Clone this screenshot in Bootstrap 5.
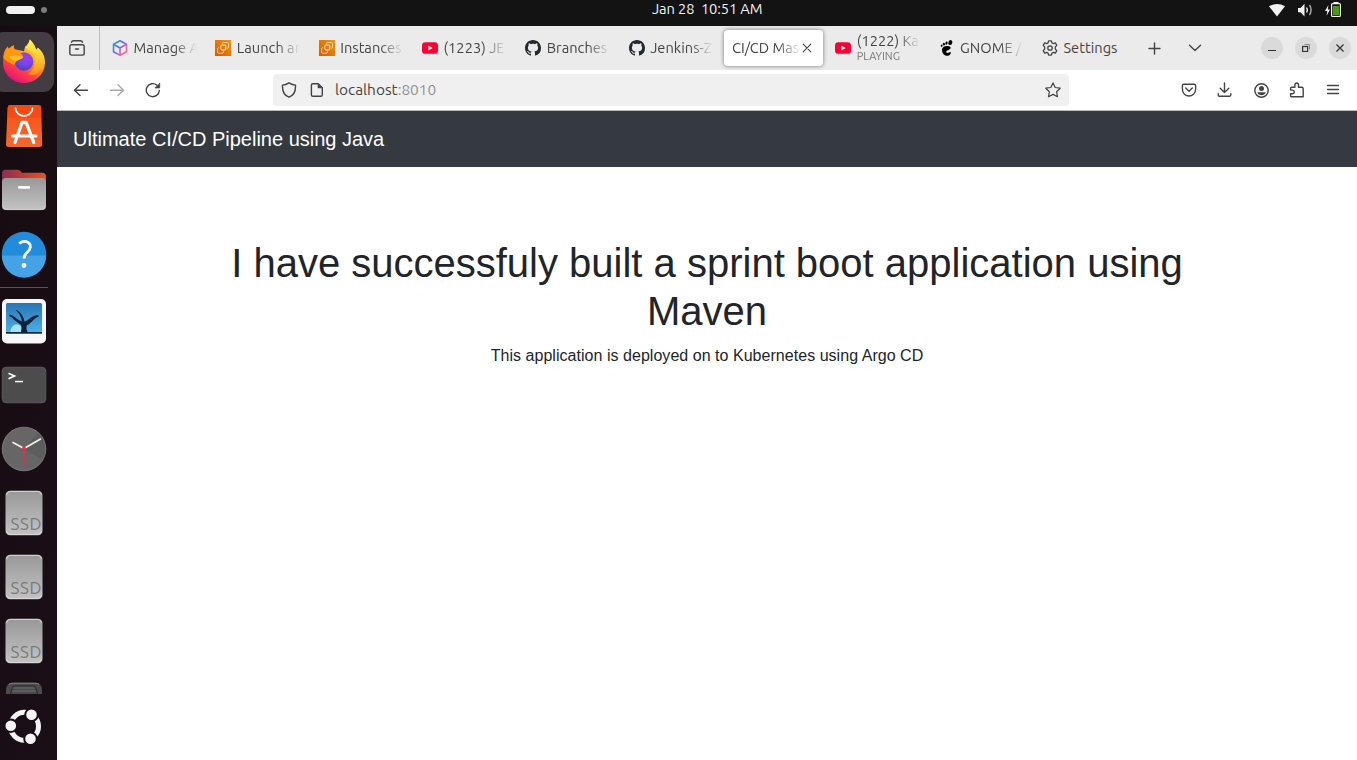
<!DOCTYPE html>
<html lang="en">
<head>
<meta charset="utf-8">
<title>CI/CD Master</title>
<link href="https://cdn.jsdelivr.net/npm/bootstrap@5.3.0/dist/css/bootstrap.min.css" rel="stylesheet">
<style>
body{width:1357px;height:760px;overflow:hidden;background:#fff;font-family:"Liberation Sans",Arial,sans-serif;color:#212529}
svg{display:block;flex:none}
.ui{font-family:Ubuntu,"Noto Sans",sans-serif;color:#444;white-space:nowrap}
.topbar{height:26px;background:#131313;padding-left:6px}
.pill{width:29px;height:8px;border-radius:4px;background:#f2f2f2;margin-top:-6px}
.dot{width:6px;height:6px;border-radius:3px;background:#7c7c7c;margin:-6px 0 0 6px}
.topbar .clock{margin-left:605px;width:114px;font-size:14.667px;line-height:18px;color:#f2f2f2;letter-spacing:-.1px;height:26px;white-space:pre}
.status{margin-left:499px;height:26px}
.dock{width:57px;height:734px;background:linear-gradient(100deg,#150c11,#1b0f17)}
.dock text{font-family:Ubuntu,"Noto Sans",sans-serif;font-size:17px;fill:#7a7a7a}
.pane{width:1300px}
.strip{height:44px;background:#ebebeb}
.viewbtn{width:43px;border-right:1px solid #bcbcbc;padding-left:12px;margin-right:4px}
.tab{width:103.33px;padding-left:8px;height:44px;flex:none}
.tab .cap{width:65px;margin-left:5.5px;font-size:14.667px;overflow:hidden;line-height:20px;-webkit-mask-image:linear-gradient(90deg,#000 40px,transparent 63px);mask-image:linear-gradient(90deg,#000 40px,transparent 63px)}
.tab .cap.full{-webkit-mask-image:none;mask-image:none}
.tab .cap.two{margin-top:-3px}
.tab .sub{font-size:11px;line-height:12px;color:#777;margin-top:-1px}
.tab.on{width:99px;height:36px;margin:0 4.3px 0 0;background:#fff;border-radius:4px;box-shadow:0 0 4px rgba(0,0,0,.5)}
.tab.on .cap{margin-left:0;width:68px;-webkit-mask-image:linear-gradient(90deg,#000 46px,transparent 69px);mask-image:linear-gradient(90deg,#000 46px,transparent 69px)}
.addtab{margin-left:9px}
.alltabs{margin:0 58px 0 25px}
.wbtn{width:22px;height:22px;border-radius:50%;background:#dadada;margin-right:12px}
.wbtn:last-child{margin-right:0}
.tools{height:41px;border-bottom:1px solid #b9b9bb;padding-left:6px;background:#fff}
.tool{width:36px;height:40px}
.url{width:796px;height:32px;margin:0 102px;border-radius:4px;background:#f0f0f0;padding:0 8px;font-size:15.4px}
.pageicon{margin:0 10px 0 12px}
.port{color:#929292}
.head{height:56px;background:#343a40;padding:0 16px;font-size:20px;color:#fff}
.hero{width:960px;margin:72px auto 0}
.hero h1{font-size:40px;line-height:48px;font-weight:400;margin-bottom:9px}
.hero p{font-size:16px;line-height:24px;margin:0;letter-spacing:.035px}
.ln{fill:none;stroke:#444;stroke-width:1.4;stroke-linecap:round;stroke-linejoin:round}
</style>
<script src="https://cdn.jsdelivr.net/npm/bootstrap@5.3.0/dist/js/bootstrap.bundle.min.js"></script>
</head>
<body>
<svg width="0" height="0" class="position-absolute">
<defs>
<linearGradient id="cube" x1="0" y1="0" x2="1" y2="1"><stop offset="0" stop-color="#13b5d8"/><stop offset=".4" stop-color="#5a6cf3"/><stop offset=".65" stop-color="#e35bd0"/><stop offset="1" stop-color="#ff7a45"/></linearGradient>
<linearGradient id="aws" x1="0" y1="1" x2="1" y2="0"><stop offset="0" stop-color="#d05c08"/><stop offset="1" stop-color="#f79408"/></linearGradient>
<linearGradient id="fox" x1=".85" y1=".1" x2=".3" y2="1"><stop offset="0" stop-color="#fff44f"/><stop offset=".4" stop-color="#ff9a1f"/><stop offset=".7" stop-color="#ff3d47"/><stop offset="1" stop-color="#e2107f"/></linearGradient>
<linearGradient id="flame" x1="0" y1="0" x2="0" y2="1"><stop offset="0" stop-color="#fff44f"/><stop offset=".5" stop-color="#ffcb2e"/><stop offset="1" stop-color="#ff8a1e"/></linearGradient>
<radialGradient id="globe" cx=".6" cy=".25" r=".8"><stop offset="0" stop-color="#a33af0"/><stop offset=".5" stop-color="#7648e6"/><stop offset="1" stop-color="#4a3fb8"/></radialGradient>
<linearGradient id="bag" x1="0" y1="0" x2="0" y2="1"><stop offset="0" stop-color="#fb4f14"/><stop offset="1" stop-color="#f0692f"/></linearGradient>
<linearGradient id="fold" x1="0" y1="0" x2="1" y2="0"><stop offset="0" stop-color="#8b2d52"/><stop offset="1" stop-color="#e8541f"/></linearGradient>
<linearGradient id="grey" x1="0" y1="0" x2="0" y2="1"><stop offset="0" stop-color="#989898"/><stop offset="1" stop-color="#c3c3c3"/></linearGradient>
<linearGradient id="sky" x1="0" y1="0" x2="0" y2="1"><stop offset="0" stop-color="#2774b5"/><stop offset="1" stop-color="#4eb3ea"/></linearGradient>
<symbol id="i-aws" viewBox="0 0 16 16"><rect width="16" height="16" fill="url(#aws)"/><g fill="none" stroke="#fff" stroke-width=".8"><rect x="5.800" y="5" width="5" height="5" rx="1.200"/><path d="M4.300 7.700H3.600q-1 0-1 1v3.500q0 1 1 1h3.700q1 0 1-1v-.9M7.500 3.800v-.4q0-.9.900-.9h4q1 0 1 1v3.800q0 1-1 1h-.3" opacity=".8"/></g></symbol>
<symbol id="i-yt" viewBox="0 0 16 16"><rect x="0" y="2.200" width="16" height="11.600" rx="3.400" fill="#ff0033"/><path d="M6.400 5.600v4.800L10.500 8z" fill="#fff"/></symbol>
<symbol id="i-gh" viewBox="0 0 16 16"><path fill="#24292f" d="M8 0C3.58 0 0 3.58 0 8c0 3.54 2.29 6.53 5.47 7.59.4.07.55-.17.55-.38 0-.19-.01-.82-.01-1.49-2.01.37-2.53-.49-2.69-.94-.09-.23-.48-.94-.82-1.13-.28-.15-.68-.52-.01-.53.63-.01 1.08.58 1.23.82.72 1.21 1.87.87 2.33.66.07-.52.28-.87.51-1.07-1.78-.2-3.64-.89-3.64-3.95 0-.87.31-1.59.82-2.15-.08-.2-.36-1.02.08-2.12 0 0 .67-.21 2.2.82.64-.18 1.32-.27 2-.27s1.36.09 2 .27c1.53-1.04 2.2-.82 2.2-.82.44 1.1.16 1.92.08 2.12.51.56.82 1.27.82 2.15 0 3.07-1.87 3.75-3.65 3.95.29.25.54.73.54 1.48 0 1.07-.01 1.93-.01 2.2 0 .21.15.46.55.38A8.01 8.01 0 0 0 16 8c0-4.42-3.58-8-8-8z"/></symbol>
<symbol id="i-ssd" viewBox="0 0 57 64"><rect x="5.500" y="9.700" width="37" height="44.500" rx="4.500" fill="url(#grey)"/><path d="M6.500 50q.5 3.500 4 3.500h27q3.500 0 4-3.500M6.500 14q.5-3.600 4-3.600h27q3.500 0 4 3.600" fill="none" stroke="#d8d8d8"/></symbol>
</defs></svg>

<div class="topbar d-flex align-items-center">
  <div class="pill"></div><div class="dot"></div>
  <div class="clock ui">Jan 28  10:51 AM</div>
  <svg class="status" width="84" height="26" viewBox="1265 0 84 26"><path d="M1269 6.300q8-4.600 16 0L1277 16.500z" fill="#f2f2f2"/><path d="M1298 8h2.500l4-4.300v12.800l-4-4.200h-2.500z" fill="#f2f2f2"/><path d="M1306.500 7.500q1.700 2.500 0 5" fill="none" stroke="#f2f2f2" stroke-width="1.300"/><path d="M1309.500 5q3.200 5 0 10" fill="none" stroke="#aaa" stroke-width="1.400"/><path d="M1328.400 5l-3.400 6h2.300l-.7 4.800 3.400-6.300h-2.200z" fill="#f2f2f2"/><rect x="1333.500" y="2" width="5" height="2" fill="#f2f2f2"/><rect x="1331.600" y="3.600" width="8.800" height="12.900" rx="1" fill="#131313" stroke="#f2f2f2" stroke-width="1.200"/><rect x="1333" y="6" width="6" height="9.300" fill="#4e9a06"/></svg>
</div>

<div class="d-flex">
  <nav class="dock d-flex flex-column flex-shrink-0">
    <svg width="57" height="68" viewBox="0 26 57 68"><rect x="-8" y="32" width="62" height="60" rx="11" fill="#433c42"/>
      <path d="M3.300 57c.4-5 2.200-8.500 4.700-10.600 0 1 .3 2 .7 2.700 1.300-1.700 3.100-3 5.200-3.600-.2 1.400 0 2.600.7 3.700l9.400 2L25 47c2.200-1.200 4-4 4.900-7.500 3.500 3.500 5.500 7 6.200 10.500l1.700-2.200C43 52 45.200 57 45 63c-.5 11.500-9.500 20-21 20S3 74 3 62.500z" fill="url(#fox)"/>
      <path d="M25 47c2.200-1.200 4-4 4.900-7.500 3.500 3.500 5.500 7 6.200 10.500l1.700-2.200C45 55 46 64 40 71c-4 5-10 4-12 3 8-4 9-17 4-22z" fill="url(#flame)"/>
      <circle cx="24" cy="61.500" r="9.300" fill="url(#globe)"/>
      <path d="M8 46.400c0 1 .3 2 .7 2.700 1.300-1.700 3.100-3 5.200-3.600-.2 2 .5 4 2 5.300 3 0 5 1.500 7.500 6.200-2 2.500-5 2.800-6.700 4-1.700 1.300-1.200 3.200-2.600 4C8.500 63 5 60 3.500 58c0-5 2-9.500 4.500-11.600z" fill="#ff980e"/>
      <path d="M9.500 56.500c4-2 9-1 13.700.5-1.500 2.500-5 2.500-6.700 3.500-2 1-5-1-7-4z" fill="#ffbd2e"/></svg>
    <svg width="57" height="64" viewBox="0 94 57 64"><path d="M11 105h27q3 0 3.200 3l1 36q0 3-3 3H9q-3.200 0-3-3l1.600-36q.3-3 3.400-3z" fill="url(#bag)"/><path d="M8 105h33v13H7z" fill="#f04510" opacity=".55"/><path d="M15.500 108.500c1.500 10 15.500 10 17 0" fill="none" stroke="#fff" stroke-width="1.800" stroke-linecap="round"/><path d="M15 142.500l7-20h4.200l7.500 20" fill="none" stroke="#fff" stroke-width="3.300" stroke-linecap="round" stroke-linejoin="round"/><path d="M12.500 136h23.500" stroke="#fff" stroke-width="3" stroke-linecap="round"/></svg>
    <svg width="57" height="64" viewBox="0 158 57 64"><path d="M2 184v-11q0-3.200 3.500-3.200h12.500q1.800 0 3 1.800l1 1.200h20q4 0 4 4v8z" fill="url(#fold)"/><rect x="2" y="178" width="44" height="32" rx="4" fill="url(#grey)"/><path d="M3 206q.5 3.600 4 3.600h34q3.500 0 4-3.600" fill="none" stroke="#d0d0d0"/><rect x="18" y="186" width="12" height="2.800" rx="1" fill="#fff"/></svg>
    <svg width="57" height="64" viewBox="0 222 57 64"><circle cx="24" cy="254" r="22.200" fill="#238bdb"/><path d="M1.800 255.500h44.400a22.200 22.200 0 0 1-44.400 0z" fill="#44a2e5"/><path d="M19.200 243.500c3.500-3.600 11.200-2.500 11.200 3.300 0 5.500-6.400 5.600-6.400 11.700" fill="none" stroke="#fff" stroke-width="2.800"/><circle cx="24" cy="265.500" r="2.400" fill="#fff"/></svg>
    <svg width="57" height="3" viewBox="0 286 57 3"><rect y="287" width="48" height="1" fill="#57535a"/></svg>
    <svg width="57" height="64" viewBox="0 289 57 64"><rect x="2" y="299" width="44" height="44.500" rx="5" fill="#f7f7f7"/><rect x="6" y="303" width="36" height="31" rx="1.500" fill="url(#sky)"/><path d="M10.500 332c0-10 12-10 12.500 0z" fill="#a9e2ff"/><path d="M6 332h36v1.500H6zM21 332c1-6 .5-7-2-8.500-3.500-2-6-5.500-10-7.700l1-1.300c4 1 7.500 5.500 12 7-1-6-3-8-6.500-12 5.500 2.500 8 6.500 9 12 4-1 6-5.500 13.500-6.500l1 1.500c-5.500 1.500-8 7.500-12 8.500-.8 2-.8 4 .5 7z" fill="#0b2338"/></svg>
    <svg width="57" height="64" viewBox="0 353 57 64"><rect x="2.200" y="367.200" width="43.600" height="35.600" rx="4" fill="#4c4c4c" stroke="#666" stroke-width=".8"/><path d="M8.500 373.300l6 2.700-6 2.800" fill="none" stroke="#fff" stroke-width="1.700"/><rect x="15" y="380.800" width="8" height="1.500" fill="#fff"/></svg>
    <svg width="57" height="64" viewBox="0 417 57 64"><circle cx="24" cy="449" r="21.800" fill="#666" stroke="#878787" stroke-width=".8"/><path d="M24 449l18.500 10.500A21.500 21.500 0 0 0 38 433z" fill="#5d5d5d"/><path d="M13 442.500l11 6 16.500-9.500" fill="none" stroke="#f3f3e9" stroke-width="1.600" stroke-linecap="round"/><path d="M24 446v19" stroke="#ff2744" stroke-width="1.100"/><circle cx="24" cy="448.500" r="1.900" fill="#ff2744"/></svg>
    <svg width="57" height="64"><use href="#i-ssd"/><text x="10.500" y="49" textLength="31">SSD</text></svg>
    <svg width="57" height="64"><use href="#i-ssd"/><text x="10.500" y="49" textLength="31">SSD</text></svg>
    <svg width="57" height="64"><use href="#i-ssd"/><text x="10.500" y="49" textLength="31">SSD</text></svg>
    <svg width="57" height="21" viewBox="0 673 57 21"><path d="M6 694v-4q.3-7 6-7h24q5.700 0 6 7v4z" fill="#4b4b4b"/><path d="M9 684.500q1-1.300 4-1.300h22q3 0 4 1.300" stroke="#888" fill="none"/><path d="M10.500 694l1.500-6q.5-2 2.500-2h19q2 0 2.500 2l1.500 6" fill="#4a4a4a" stroke="#2d2d2d"/><path d="M13.500 688h21M12.500 691h23" stroke="#6f6f6f"/></svg>
    <svg width="57" height="66" viewBox="0 694 57 66"><circle cx="24.500" cy="726.300" r="14" fill="none" stroke="#f4f4f4" stroke-width="5"/><g fill="#f4f4f4" stroke="#190e14" stroke-width="2"><circle cx="31.500" cy="714.800" r="6.300"/><circle cx="10.800" cy="725.700" r="6.300"/><circle cx="30.500" cy="738.800" r="6.300"/></g></svg>
  </nav>

  <main class="pane flex-shrink-0">
    <div class="strip ui d-flex align-items-center">
      <div class="viewbtn h-100 d-flex align-items-center flex-shrink-0"><svg width="16" height="16" viewBox="0 0 16 16" class="ln"><rect x=".8" y="4.800" width="14.400" height="10.300" rx="1.800"/><path d="M2.500 2.200q.4-1.400 2-1.400h7q1.600 0 2 1.400M6.500 9h3"/></svg></div>
      <div class="tab d-flex align-items-center"><svg width="16" height="16" viewBox="0 0 16 16"><path d="M8 .8l6.500 3.500v7.400L8 15.200l-6.500-3.500V4.300zM1.500 4.300L8 8l6.500-3.700M8 8v7" fill="none" stroke="url(#cube)" stroke-width="1.600" stroke-linejoin="round"/></svg><div class="cap">Manage A</div></div>
      <div class="tab d-flex align-items-center"><svg width="16" height="16"><use href="#i-aws"/></svg><div class="cap">Launch an</div></div>
      <div class="tab d-flex align-items-center"><svg width="16" height="16"><use href="#i-aws"/></svg><div class="cap">Instances</div></div>
      <div class="tab d-flex align-items-center"><svg width="16" height="16"><use href="#i-yt"/></svg><div class="cap">(1223) JE</div></div>
      <div class="tab d-flex align-items-center"><svg width="16" height="16"><use href="#i-gh"/></svg><div class="cap">Branches</div></div>
      <div class="tab d-flex align-items-center"><svg width="16" height="16"><use href="#i-gh"/></svg><div class="cap">Jenkins-Z</div></div>
      <div class="tab on d-flex align-items-center"><div class="cap">CI/CD Mas</div><svg width="14" height="14" viewBox="0 0 14 14" class="ln"><path d="M3.200 3.200l7.600 7.600M10.800 3.200l-7.600 7.600" stroke-width="1.100"/></svg></div>
      <div class="tab d-flex align-items-center"><svg width="16" height="16"><use href="#i-yt"/></svg><div class="cap two">(1222) Ka<div class="sub">PLAYING</div></div></div>
      <div class="tab d-flex align-items-center"><svg width="16" height="16" viewBox="0 0 16 16"><g fill="#000"><ellipse cx="11.300" cy="2.600" rx="1.900" ry="2.500" transform="rotate(20 11.300 2.600)"/><ellipse cx="7.500" cy="3.100" rx="1.100" ry="1.700" transform="rotate(10 7.500 3.100)"/><ellipse cx="4.900" cy="4.200" rx="1" ry="1.400"/><ellipse cx="2.700" cy="5.700" rx=".9" ry="1.200" transform="rotate(-15 2.700 5.700)"/><path d="M11.500 7.200C10 4.700 2.500 5.800 3 10.300c.3 3 2.200 5.500 5 5.500 2.600 0 4.500-2.600 3.600-3.600-.8-.8-1.700.9-3.200.7-1.500-.2-1.600-1.900-.2-2.500 1.700-.7 4-1.400 3.300-3.200z"/></g></svg><div class="cap">GNOME /</div></div>
      <div class="tab d-flex align-items-center"><svg width="16" height="16" viewBox="0 0 16 16" class="ln"><path d="M6.600.8h2.800l.5 2 1.400.8 2-.7 1.500 2.500-1.500 1.500v2.200l1.500 1.500-1.500 2.500-2-.7-1.400.8-.5 2H6.600l-.5-2-1.400-.8-2 .7-1.500-2.500 1.500-1.500V6.900L1.200 5.400l1.500-2.500 2 .7 1.400-.8z" stroke-width="1.300"/><circle cx="8" cy="8" r="2.200" stroke-width="1.300"/></svg><div class="cap full">Settings</div></div>
      <svg class="ln addtab" width="16" height="16" viewBox="0 0 16 16"><path d="M8.500 3v11M3 8.500h11"/></svg>
      <svg class="ln alltabs" width="16" height="16" viewBox="0 0 16 16"><path d="M2.500 5.200L8 10.500l5.500-5.300"/></svg>
      <div class="wbtn d-flex align-items-center justify-content-center flex-shrink-0"><svg width="8" height="8" viewBox="0 0 8 8"><path d="M0 6.500h8" stroke="#333"/></svg></div>
      <div class="wbtn d-flex align-items-center justify-content-center flex-shrink-0"><svg width="8" height="8" viewBox="0 0 8 8" fill="none"><rect x=".6" y="2.500" width="5" height="5" stroke="#333" stroke-width="1.200"/><path d="M2.500.5h5v5" stroke="#888"/></svg></div>
      <div class="wbtn d-flex align-items-center justify-content-center flex-shrink-0"><svg width="8" height="8" viewBox="0 0 8 8"><path d="M.5.500l7 7M7.500.5l-7 7" stroke="#333" stroke-width="1.300"/></svg></div>
    </div>

    <div class="tools ui d-flex align-items-center">
      <div class="tool d-flex align-items-center justify-content-center"><svg width="16" height="16" viewBox="0 0 16 16" class="ln"><path d="M14.500 8.200H1.500M7 2.800L1.500 8.200 7 13.600"/></svg></div>
      <div class="tool d-flex align-items-center justify-content-center"><svg width="16" height="16" viewBox="0 0 16 16" class="ln" opacity=".45"><path d="M1.500 8.200h13M9 2.800l5.500 5.400L9 13.600"/></svg></div>
      <div class="tool d-flex align-items-center justify-content-center"><svg width="16" height="16" viewBox="0 0 16 16" class="ln"><path d="M14.300 8.500A6.500 6.500 0 1 1 12 3.200"/><path d="M14.700 1.500v4.400h-4.400z" fill="#444" stroke-width=".8"/></svg></div>
      <div class="url d-flex align-items-center">
        <svg width="16" height="16" viewBox="0 0 16 16" class="ln"><path d="M8 .8q3.400 2.200 6.500 2.300C14.800 8.500 12.500 13.500 8 15.200 3.500 13.500 1.200 8.500 1.500 3.100 4.600 3 8 .8 8 .8z"/></svg>
        <svg class="ln pageicon" width="16" height="16" viewBox="0 0 16 16"><path d="M3.800 1.700h5.500l4 4v7q0 1.600-1.600 1.600H3.800q-1.400 0-1.400-1.600v-9.400q0-1.600 1.400-1.600z"/><path d="M8.700 1.700v4.600h4.600z" fill="#444" stroke="none"/></svg>
        <div>localhost<span class="port">:8010</span></div>
        <svg class="ms-auto ln" width="16" height="16" viewBox="0 0 16 16"><path d="M8 .9l2.200 4.600 5 .7-3.600 3.500.9 5.100L8 12.400l-4.500 2.400.9-5.100L.8 6.200l5-.7z" stroke-width="1.200"/></svg>
      </div>
      <div class="tool d-flex align-items-center justify-content-center"><svg width="16" height="16" viewBox="0 0 16 16" class="ln"><path d="M2.700 2.200h10.600q1.300 0 1.300 1.400v3.400c0 9.400-13.200 9.400-13.200 0V3.600q0-1.400 1.300-1.400zM4.700 6L8 9.200 11.300 6"/></svg></div>
      <div class="tool d-flex align-items-center justify-content-center"><svg width="16" height="16" viewBox="0 0 16 16" class="ln"><path d="M7.500 1v9.500M3.200 6.300l4.300 4.200 4.300-4.200M1.200 11.700v1.200q0 1.400 1.400 1.400h9.800q1.400 0 1.400-1.400v-1.200"/></svg></div>
      <div class="tool d-flex align-items-center justify-content-center"><svg width="16" height="16" viewBox="0 0 16 16" class="ln"><circle cx="8.500" cy="8.500" r="6.700"/><circle cx="8.500" cy="6.500" r="2.500" fill="#444" stroke="none"/><path d="M4.300 10.300h8.400c-.6 4-7.800 4-8.400 0z" fill="#444" stroke="none"/></svg></div>
      <div class="tool d-flex align-items-center justify-content-center"><svg width="16" height="16" viewBox="0 0 16 16" class="ln"><path d="M2.600 5.200h3.300V2.900q0-1.900 1.800-1.900t1.800 1.900v2.300h3.200q1.500 0 1.500 1.500v8.100H2.600q-1 0-1-1v-2.100h1.800q1.900-.1 1.900-1.800T3.400 8.100H1.600V6.200q0-1 1-1z"/></svg></div>
      <div class="tool d-flex align-items-center justify-content-center"><svg width="16" height="16" viewBox="0 0 16 16" class="ln"><path d="M2.500 3.500h11M2.500 7.500h11M2.500 11.500h11" stroke-width="1.300"/></svg></div>
    </div>

    <header class="head d-flex align-items-center">Ultimate CI/CD Pipeline using Java</header>
    <section class="hero text-center">
      <h1>I have successfuly built a sprint boot application using Maven</h1>
      <p>This application is deployed on to Kubernetes using Argo CD</p>
    </section>
  </main>
</div>
</body>
</html>
